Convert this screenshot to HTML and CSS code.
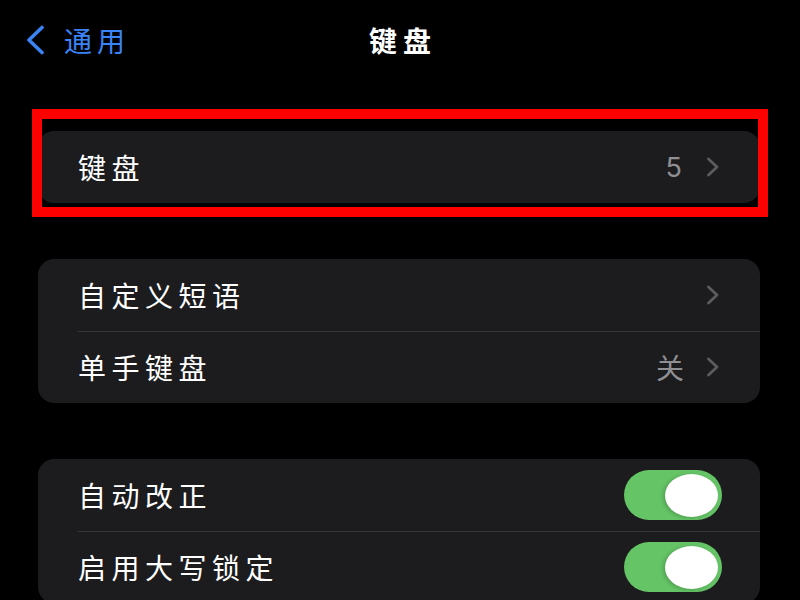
FILE: index.html
```html
<!DOCTYPE html>
<html lang="zh-CN">
<head>
    <meta charset="UTF-8">
    <title>键盘</title>
    <link rel="stylesheet" href="styles.css">
</head>
<body>

    <header class="nav-bar">
        <a href="#" class="nav-back">
            <svg class="back-chevron" viewBox="0 0 20 30" width="20" height="30">
                <path d="M17 2.5 L4 15 L17 27.5" fill="none" stroke="currentColor" stroke-width="3.6" stroke-linecap="round" stroke-linejoin="round"/>
            </svg>
            <span>通用</span>
        </a>
        <div class="nav-title">键盘</div>
        <div></div>
    </header>

    <main class="settings">

        <div class="group-wrap highlighted">
            <div class="group">
                <div class="row">
                    <span class="row-label">键盘</span>
                    <span class="row-value num">5</span>
                    <svg class="chevron" viewBox="0 0 14 20" width="14" height="20"><path d="M2.5 2 L11 10 L2.5 18" fill="none" stroke="currentColor" stroke-width="2.8" stroke-linecap="round" stroke-linejoin="round"/></svg>
                </div>
            </div>
        </div>

        <div class="group">
            <div class="row">
                <span class="row-label">自定义短语</span>
                <svg class="chevron" viewBox="0 0 14 20" width="14" height="20"><path d="M2.5 2 L11 10 L2.5 18" fill="none" stroke="currentColor" stroke-width="2.8" stroke-linecap="round" stroke-linejoin="round"/></svg>
            </div>
            <div class="row">
                <span class="row-label">单手键盘</span>
                <span class="row-value">关</span>
                <svg class="chevron" viewBox="0 0 14 20" width="14" height="20"><path d="M2.5 2 L11 10 L2.5 18" fill="none" stroke="currentColor" stroke-width="2.8" stroke-linecap="round" stroke-linejoin="round"/></svg>
            </div>
        </div>

        <div class="group">
            <div class="row">
                <span class="row-label">自动改正</span>
                <span class="switch on"><span class="knob"></span></span>
            </div>
            <div class="row">
                <span class="row-label">启用大写锁定</span>
                <span class="switch on"><span class="knob"></span></span>
            </div>
        </div>

    </main>

</body>
</html>
```

FILE: styles.css
```css
:root {
    --bg: #000000;
    --card-bg: #1c1c1e;
    --text: #ffffff;
    --text-dim: #8e8e93;
    --chevron: #5c5c60;
    --separator: #38383a;
    --blue: #3a84f6;
    --green: #65c466;
    --mark: #ff0000;
}

body {
    margin: 0;
    width: 800px;
    height: 600px;
    overflow: hidden;
    background-color: var(--bg);
    color: var(--text);
    font-family: "Noto Sans CJK SC", "Noto Sans", sans-serif;
}

/* ---- nav bar ---- */

.nav-bar {
    display: grid;
    grid-template-columns: 1fr auto 1fr;
    align-items: center;
    height: 80px;
}
.nav-back {
    display: flex; align-items: center; gap: 19px;
    margin-left: 25px;
    color: var(--blue); text-decoration: none;
    font-size: 28px; letter-spacing: 5px;
    justify-self: start;
}
.back-chevron { display: block; flex-shrink: 0; }
.nav-title {
    font-size: 28px; font-weight: 700; letter-spacing: 6px;
    margin-right: -6px;
}

/* ---- groups ---- */

.settings {
    display: flex; flex-direction: column;
    gap: 56px;
    padding: 51px 40px 0 38px;
}

.group {
    background-color: var(--card-bg);
    border-radius: 16px;
    overflow: hidden;
}

.group-wrap.highlighted { position: relative; }
.group-wrap.highlighted::after {
    content: "";
    position: absolute;
    top: -22px; left: -6px; right: -8px; bottom: -14px;
    border: 10px solid var(--mark);
    pointer-events: none;
}

.row {
    display: flex; align-items: center;
    height: 72px;
    padding: 0 40px 0 40px;
    position: relative;
}
.row + .row::before {
    content: "";
    position: absolute; top: 0; left: 40px; right: 0;
    height: 1px; background-color: var(--separator);
}

.row-label {
    flex: 1;
    font-size: 28px; letter-spacing: 5.5px;
}
.row-value {
    color: var(--text-dim);
    font-size: 28px;
    margin-right: 22px;
}
.row-value.num { font-family: "Inter", "Noto Sans", sans-serif; font-size: 27px; margin-right: 24px; }
.chevron { color: var(--chevron); display: block; flex-shrink: 0; }

/* ---- switch ---- */

.switch {
    display: flex; align-items: center; justify-content: flex-end;
    width: 98px; height: 50px;
    border-radius: 25px;
    background-color: #3a3a3c;
    margin-right: -2px;
    padding: 0 4px;
    box-sizing: border-box;
}
.switch.on { background-color: var(--green); }
.switch .knob {
    width: 53px; height: 43px;
    border-radius: 50%;
    background-color: #ffffff;
    box-shadow: -2px 1px 4px rgba(0, 0, 0, 0.2);
}
```
